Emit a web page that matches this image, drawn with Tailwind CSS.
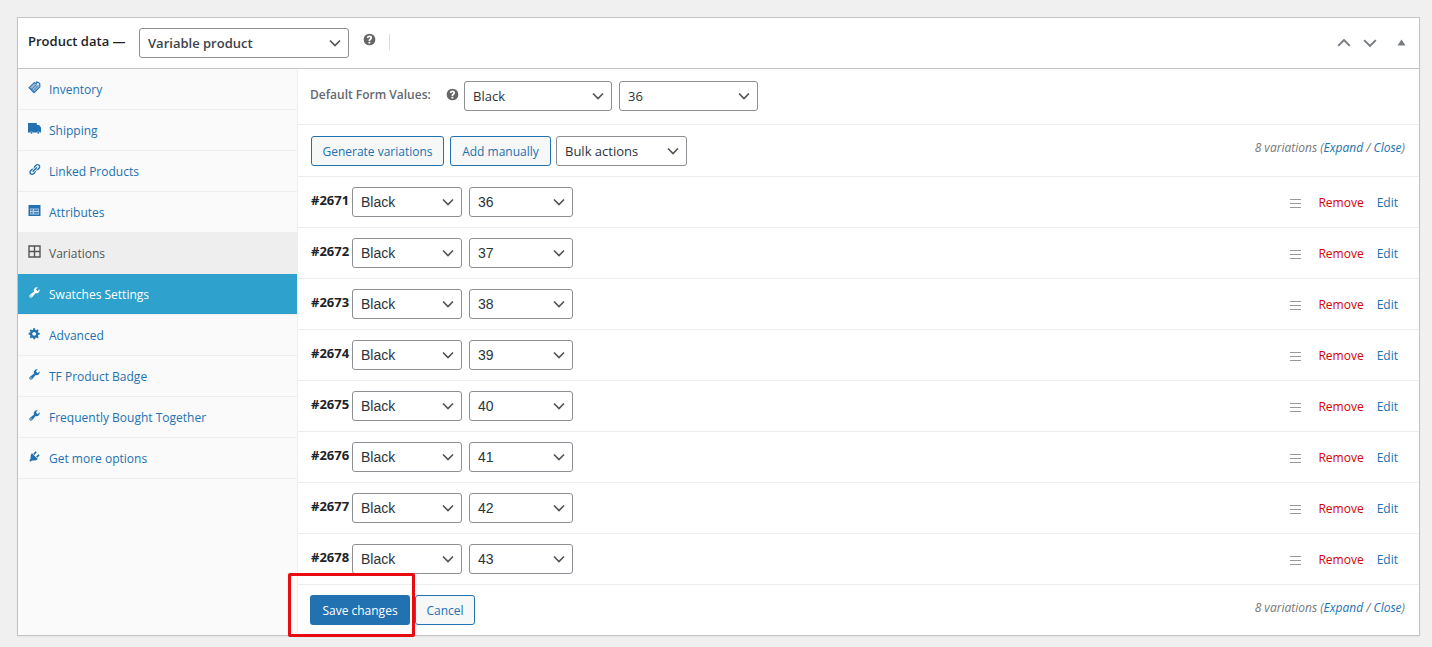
<!DOCTYPE html>
<html lang="en">
<head>
    <meta charset="UTF-8">
    <meta name="viewport" content="width=device-width, initial-scale=1.0">
    <title>Product data</title>
    <script src="https://cdn.jsdelivr.net/npm/@tailwindcss/browser@4"></script>
</head>
<body class="bg-[#f0f0f1] min-h-screen pt-[17px] pl-[17px] pr-3 pb-3 font-['Open_Sans',sans-serif] text-xs text-[#3c434a]">
    <!-- icon sprite -->
    <svg class="hidden">
        <symbol id="chevron" viewBox="0 0 12 12"><path d="M1 3.5l5 5 5-5" fill="none" stroke="currentColor" stroke-width="1.7"/></symbol>
        <symbol id="help" viewBox="0 0 20 20">
            <path fill-rule="evenodd" fill="currentColor" d="M10 1a9 9 0 1 0 0 18 9 9 0 0 0 0-18zM8.6 12.2h2.6v-.6c0-.5.4-.9 1.1-1.4 1-.7 1.7-1.5 1.7-2.8C14 5.2 12.3 4 10 4 7.7 4 6.2 5.3 6 7.5h2.6c.1-.8.5-1.3 1.3-1.3.7 0 1.2.4 1.2 1.1 0 .6-.3.9-1 1.4-1 .7-1.500 1.4-1.500 2.7zm-.2 1.300v2.600h2.900v-2.600z"/>
        </symbol>
        <symbol id="tag" viewBox="0 0 12 12">
            <path d="M1 6.200L5.800 1.600 7.600 2.400 8.200.8l2.600 1.400.2 3.200L5.600 10.800z" fill="#9fbbd8" stroke="currentColor" stroke-width="1"/>
            <path d="M2.800 6.500l2.800 2.600M4.300 5l2.900 2.700M5.800 3.600l2.900 2.700M3.600 7.500l4.200-4.200M5 9l4.500-4.500" stroke="currentColor" stroke-width=".5"/>
            <circle cx="9.200" cy="2.800" r=".8" fill="#fafafa"/>
        </symbol>
        <symbol id="truck" viewBox="0 0 13 13">
            <path d="M0 1h8.800v2H11l2 2.500v5h-1.200a1.500 1.500 0 0 0-2.900 0H5a1.500 1.500 0 0 0-2.900 0H0z" fill="currentColor"/>
            <circle cx="3.500" cy="10.800" r="1" fill="currentColor"/><circle cx="10.300" cy="10.800" r="1" fill="currentColor"/>
        </symbol>
        <symbol id="link" viewBox="0 0 20 20"><path fill="currentColor" d="M17.740 2.760c1.680 1.690 1.680 4.410 0 6.100l-1.530 1.520c-1.120 1.120-2.700 1.470-4.140 1.090l2.620-2.610.76-.77.76-.76c.84-.84.84-2.200 0-3.040-.84-.85-2.200-.85-3.040 0l-.77.76-3.380 3.380c-.37-1.440-.02-3.020 1.100-4.140l1.520-1.530c1.690-1.680 4.420-1.680 6.100 0zM8.590 13.430l5.340-5.340c.42-.42.42-1.100 0-1.520-.44-.43-1.130-.39-1.530 0l-5.330 5.340c-.42.42-.42 1.100 0 1.520.44.43 1.130.39 1.520 0zm-.76 2.290l4.140-4.150c.38 1.440.03 3.020-1.090 4.140l-1.520 1.530c-1.690 1.680-4.410 1.680-6.100 0-1.680-1.680-1.680-4.420 0-6.100l1.530-1.520c1.120-1.120 2.700-1.470 4.140-1.100l-4.140 4.150c-.85.84-.85 2.200 0 3.050.84.84 2.200.84 3.040 0z"/></symbol>
        <symbol id="list" viewBox="0 0 13 13">
            <path fill="currentColor" d="M.5 1h12v11H.5z"/>
            <path fill="#b5cde3" d="M2 4.500h9v6H2z"/>
            <path d="M2.600 6.200h2.200M6 6.200h4.500M2.600 8.800h2.200M6 8.800h4.500" stroke="currentColor" stroke-width="1.300"/>
        </symbol>
        <symbol id="grid" viewBox="0 0 13 13"><path d="M1 1h11v11H1zM6.500 1v11M1 6.500h11" fill="none" stroke="currentColor" stroke-width="1.400"/></symbol>
        <symbol id="wrench" viewBox="0 0 20 20"><path fill="currentColor" d="M16.680 9.770c-1.340 1.340-3.300 1.670-4.950.99l-5.410 6.520c-.99.99-2.590.99-3.580 0s-.99-2.590 0-3.570l6.520-5.420c-.68-1.650-.35-3.610.99-4.950 1.280-1.280 3.120-1.620 4.720-1.060l-2.890 2.890 2.820 2.820 2.860-2.870c.53 1.580.18 3.390-1.080 4.650zM3.810 16.210c.4.39 1.040.39 1.430 0 .4-.4.4-1.040 0-1.430-.39-.4-1.030-.4-1.430 0-.39.39-.39 1.030 0 1.430z"/></symbol>
        <symbol id="gear" viewBox="0 0 20 20"><path fill="currentColor" d="M18 12h-2.180c-.17.7-.44 1.350-.81 1.930l1.540 1.540-2.100 2.100-1.540-1.540c-.58.36-1.230.63-1.910.79V19H8v-2.180c-.68-.16-1.330-.43-1.910-.79l-1.540 1.540-2.120-2.120 1.540-1.540c-.36-.58-.63-1.230-.79-1.910H1V9.030h2.170c.16-.7.44-1.350.8-1.940L2.430 5.550l2.100-2.100 1.540 1.540c.58-.37 1.240-.64 1.930-.81V2h3v2.180c.68.16 1.330.43 1.910.79l1.540-1.540 2.120 2.120-1.540 1.540c.36.59.64 1.240.8 1.940H18V12zm-8.500 1.500c1.660 0 3-1.340 3-3s-1.340-3-3-3-3 1.340-3 3 1.340 3 3 3z"/></symbol>
        <symbol id="plug" viewBox="0 0 20 20"><path fill="currentColor" d="M13.110 4.360L9.870 7.600 8 5.730l3.240-3.240c.35-.34 1.050-.2 1.560.32.52.51.66 1.210.31 1.550zm-8 1.770l.91-1.120 9.010 9.010-1.190.84c-.71.71-2.630 1.160-3.820 1.160H6.140L4.900 17.260c-.59.59-1.540.59-2.120 0-.59-.58-.59-1.530 0-2.120l1.240-1.240v-3.880c0-1.130.4-3.190 1.090-3.890zm7.260 3.970l3.240-3.240c.34-.35 1.040-.21 1.550.31.52.51.66 1.210.31 1.550l-3.240 3.250z"/></symbol>
    </svg>

    <main class="bg-white border border-[#c3c4c7] shadow-xs">
        <header class="flex items-center h-[51px] pl-[10px] pr-[13px] border-b border-[#c3c4c7]">
            <label for="productType" class="w-[111px] pb-[2px] text-[13px] font-semibold text-[#1d2327]">Product data —</label>
            <div class="relative w-[210px]">
                <select id="productType" class="appearance-none w-full h-[30px] pt-[2px] pl-2 pr-6 border border-[#8c8f94] rounded-[3px] bg-white text-[13px] font-semibold text-[#3c434a]">
                    <option>Variable product</option>
                    <option>Simple product</option>
                </select>
                <svg class="absolute right-2 top-[9px] size-3 text-[#555] pointer-events-none"><use href="#chevron"/></svg>
            </div>
            <svg class="size-[13px] ml-[14px] mb-[7px] text-[#666]"><use href="#help"/></svg>
            <div class="h-4 ml-[13px] mb-[3px] border-l border-[#dcdcde]"></div>
            <div class="ml-auto flex items-center text-[#787c82]">
                <button type="button" aria-label="Move up" class="mr-3"><svg class="w-[14px] h-[14px] rotate-180"><use href="#chevron"/></svg></button>
                <button type="button" aria-label="Move down" class="mr-5"><svg class="w-[14px] h-[14px]"><use href="#chevron"/></svg></button>
                <button type="button" aria-label="Toggle panel" class="pb-[2px]"><svg class="w-[9px] h-[7px]" viewBox="0 0 9 7"><path d="M4.500 0.500L8.500 6.500h-8z" fill="currentColor"/></svg></button>
            </div>
        </header>

        <div class="flex">
            <nav class="w-[280px] shrink-0 bg-[#fafafa] border-r border-[#eee] text-[#2271b1]">
                <a href="#" class="flex items-center h-[41px] pt-[2px] pl-[10px] border-b border-[#eee]"><svg class="size-[13px] mr-2 mb-[5px]"><use href="#tag"/></svg>Inventory</a>
                <a href="#" class="flex items-center h-[41px] pt-[2px] pl-[10px] border-b border-[#eee]"><svg class="size-[13px] mr-2 mb-[5px]"><use href="#truck"/></svg>Shipping</a>
                <a href="#" class="flex items-center h-[41px] pt-[2px] pl-[10px] border-b border-[#eee]"><svg class="size-[13px] mr-2 mb-[5px]"><use href="#link"/></svg>Linked Products</a>
                <a href="#" class="flex items-center h-[41px] pt-[2px] pl-[10px] border-b border-[#eee]"><svg class="size-[13px] mr-2 mb-[5px]"><use href="#list"/></svg>Attributes</a>
                <a href="#" class="flex items-center h-[41px] pt-[2px] pl-[10px] border-b border-[#eee] bg-[#eee] text-[#555]"><svg class="size-[13px] mr-2 mb-[5px]"><use href="#grid"/></svg>Variations</a>
                <a href="#" class="flex items-center h-[41px] pt-[2px] pl-[10px] border-b border-[#eee] bg-[#2ea2cc] text-white"><svg class="size-[13px] mr-2 mb-[5px]"><use href="#wrench"/></svg>Swatches Settings</a>
                <a href="#" class="flex items-center h-[41px] pt-[2px] pl-[10px] border-b border-[#eee]"><svg class="size-[13px] mr-2 mb-[5px]"><use href="#gear"/></svg>Advanced</a>
                <a href="#" class="flex items-center h-[41px] pt-[2px] pl-[10px] border-b border-[#eee]"><svg class="size-[13px] mr-2 mb-[5px]"><use href="#wrench"/></svg>TF Product Badge</a>
                <a href="#" class="flex items-center h-[41px] pt-[2px] pl-[10px] border-b border-[#eee]"><svg class="size-[13px] mr-2 mb-[5px]"><use href="#wrench"/></svg>Frequently Bought Together</a>
                <a href="#" class="flex items-center h-[41px] pt-[2px] pl-[10px] border-b border-[#eee]"><svg class="size-[13px] mr-2 mb-[5px]"><use href="#plug"/></svg>Get more options</a>
            </nav>

            <section class="flex-1">
                <div class="flex items-center h-14 pl-3 pb-[2px] border-b border-[#eee]">
                    <label for="defaultColor" class="w-[137px] pb-[2px] font-semibold text-[#646970]">Default Form Values:</label>
                    <svg class="size-[13px] -ml-px mr-[5px] mb-[2px] text-[#666]"><use href="#help"/></svg>
                    <div class="relative w-[148px] mr-[7px]">
                        <select id="defaultColor" class="appearance-none w-full h-[30px] pt-[2px] pl-2 pr-6 border border-[#8c8f94] rounded-[3px] bg-white text-[13px] text-[#2c3338]"><option>Black</option></select>
                        <svg class="absolute right-2 top-[9px] size-3 text-[#555] pointer-events-none"><use href="#chevron"/></svg>
                    </div>
                    <div class="relative w-[139px]">
                        <select aria-label="Default size" class="appearance-none w-full h-[30px] pt-[2px] pl-2 pr-6 border border-[#8c8f94] rounded-[3px] bg-white text-[13px] text-[#2c3338]"><option>36</option></select>
                        <svg class="absolute right-2 top-[9px] size-3 text-[#555] pointer-events-none"><use href="#chevron"/></svg>
                    </div>
                </div>

                <div class="flex items-center h-[52px] pl-[13px] pr-[14px] border-b border-[#eee]">
                    <button type="button" class="w-[133px] h-[30px] pt-[2px] mr-[6px] border border-[#2271b1] rounded-[3px] bg-[#f6f7f7] text-[#2271b1] whitespace-nowrap">Generate variations</button>
                    <button type="button" class="w-[101px] h-[30px] pt-[2px] mr-[5px] border border-[#2271b1] rounded-[3px] bg-[#f6f7f7] text-[#2271b1] whitespace-nowrap">Add manually</button>
                    <div class="relative w-[131px]">
                        <select aria-label="Bulk actions" class="appearance-none w-full h-[30px] pt-[2px] pl-2 pr-6 border border-[#8c8f94] rounded-[3px] bg-white text-[13px] text-[#2c3338]"><option>Bulk actions</option></select>
                        <svg class="absolute right-2 top-[9px] size-3 text-[#555] pointer-events-none"><use href="#chevron"/></svg>
                    </div>
                    <p class="ml-auto pb-[6px] italic text-[#777]">8 variations (<a href="#" class="text-[#2271b1]">Expand</a> / <a href="#" class="text-[#2271b1]">Close</a>)</p>
                </div>

                <div id="variations"></div>

                <div class="flex items-center h-[50px] pl-3 pr-[14px]">
                    <div class="relative mr-[5px]">
                        <button type="button" class="w-[100px] h-[30px] pt-[2px] rounded-[3px] bg-[#2271b1] text-white whitespace-nowrap">Save changes</button>
                        <!-- highlight around the save button -->
                        <div class="absolute -left-[22px] -right-[5px] -top-[22px] -bottom-3 border-3 border-[#e80c10] rounded-xs pointer-events-none"></div>
                    </div>
                    <button type="button" class="w-[60px] h-[30px] pt-[2px] border border-[#2271b1] rounded-[3px] bg-[#f6f7f7] text-[#2271b1]">Cancel</button>
                    <p class="ml-auto pb-1 italic text-[#777]">8 variations (<a href="#" class="text-[#2271b1]">Expand</a> / <a href="#" class="text-[#2271b1]">Close</a>)</p>
                </div>
            </section>
        </div>
    </main>

    <script>
        const variations = [
            { id: 2671, size: 36 },
            { id: 2672, size: 37 },
            { id: 2673, size: 38 },
            { id: 2674, size: 39 },
            { id: 2675, size: 40 },
            { id: 2676, size: 41 },
            { id: 2677, size: 42 },
            { id: 2678, size: 43 }
        ];

        document.getElementById('variations').innerHTML = variations.map(v => `
            <div class="flex items-center h-[51px] pl-[13px] pr-[21px] border-b border-[#eee]">
                <label for="color${v.id}" class="w-[41px] pb-[3px] text-[13px] font-bold text-[#1d2327]">#${v.id}</label>
                <div class="relative w-[110px] mr-[7px]">
                    <select id="color${v.id}" class="appearance-none w-full h-[30px] pl-2 pr-6 border border-[#8c8f94] rounded-[3px] bg-white font-['Liberation_Sans',sans-serif] text-sm text-[#2c3338]"><option>Black</option></select>
                    <svg class="absolute right-2 top-[9px] size-3 text-[#555] pointer-events-none"><use href="#chevron"/></svg>
                </div>
                <div class="relative w-[104px]">
                    <select aria-label="Size" class="appearance-none w-full h-[30px] pl-2 pr-6 border border-[#8c8f94] rounded-[3px] bg-white font-['Liberation_Sans',sans-serif] text-sm text-[#2c3338]"><option>${v.size}</option></select>
                    <svg class="absolute right-2 top-[9px] size-3 text-[#555] pointer-events-none"><use href="#chevron"/></svg>
                </div>
                <svg class="ml-auto mr-[17px] mt-[2px] w-[11px] h-[9px]" viewBox="0 0 11 9"><path d="M0 .5h11M0 4.500h11M0 8.500h11" stroke="#999" stroke-width="1"/></svg>
                <a href="#" class="mr-[13px] pt-[2px] text-[#d40000]">Remove</a>
                <a href="#" class="pt-[2px] text-[#2271b1]">Edit</a>
            </div>`).join('');
    </script>
</body>
</html>
